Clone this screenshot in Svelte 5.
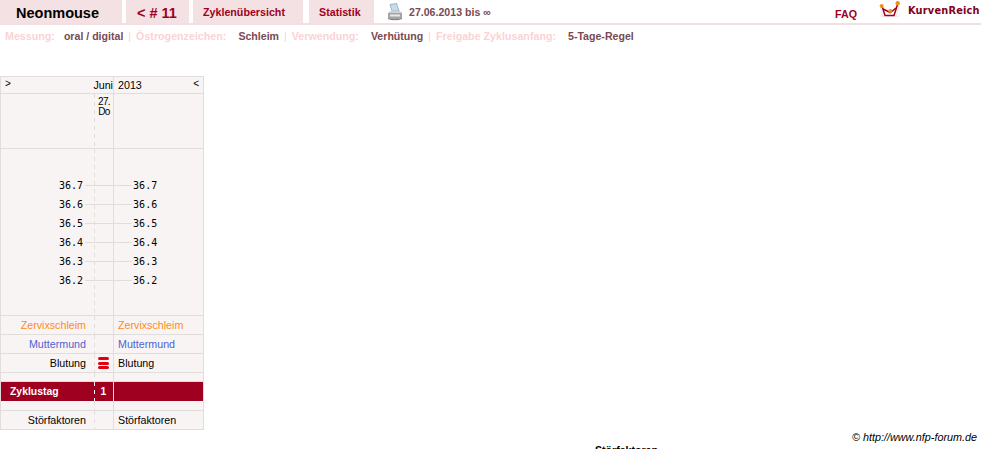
<script>
  const temps = ["36.7", "36.6", "36.5", "36.4", "36.3", "36.2"];
  const info = [
    ["Messung:", "oral / digital"],
    ["Östrogenzeichen:", "Schleim"],
    ["Verwendung:", "Verhütung"],
    ["Freigabe Zyklusanfang:", "5-Tage-Regel"]
  ];
</script>

<div class="page">
  <header class="top">
    <div class="tab name">Neonmouse</div>
    <div class="tab num">&lt; # 11</div>
    <div class="tab link over">Zyklenübersicht</div>
    <div class="tab link stat">Statistik</div>
    <svg class="printer" width="16" height="18" viewBox="0 0 16 18">
      <path d="M3 1.500 L9.500 0.500 L12 7.500 L5 8 Z" fill="#c4dcec" stroke="#7f9cb2" stroke-width="0.7"/>
      <path d="M1 10 L4 7.500 L12.500 7.500 L15 10 Z" fill="#d0d0d0"/>
      <path d="M1 10 L15 10 L15 15 Q8 17.500 1 15 Z" fill="#a4a4a4"/>
      <path d="M3 11.500 L13 11.500 L13 13.500 L3 13.500 Z" fill="#e8e8e8"/>
      <path d="M1 15 Q8 17.500 15 15 L15 16 Q8 18.500 1 16 Z" fill="#747474"/>
    </svg>
    <div class="range">27.06.2013 bis ∞</div>
    <div class="faq">FAQ</div>
    <div class="brand">
      <svg class="logo" width="21" height="18" viewBox="0 0 21 18">
        <path d="M1 4 L4 17 M20 4 L17 17 M0 15 L21 15" fill="none" stroke="#f4e2e2" stroke-width="1"/>
        <path d="M3 5 L6 14.500 L15 14.500 L19 2" fill="none" stroke="#a00020" stroke-width="1.500"/>
        <path d="M4 8 L11.300 11.500 L17 7" fill="none" stroke="#a00020" stroke-width="1.500"/>
        <circle cx="2.700" cy="5" r="2" fill="#f0901c"/>
        <circle cx="11.300" cy="10" r="2" fill="#f0901c"/>
        <circle cx="18.700" cy="2.200" r="2.200" fill="#f0901c"/>
      </svg>
      <span>KurvenReich</span>
    </div>
  </header>

  <div class="info">
    {#each info as [label, value], i}
      {#if i > 0}<span class="pipe">|</span>{/if}
      <span class="label">{label}</span>
      <span class="value" class:first={i === 0}>{value}</span>
    {/each}
  </div>

  <div class="chart">
    <div class="row head">
      <div class="month"><span class="arrow">&gt;</span><span>Juni</span></div>
      <div class="c3"><span>2013</span><span class="arrow">&lt;</span></div>
    </div>
    <div class="row dates">
      <div class="c1"></div>
      <div class="c2 dash"><span>27.</span><span>Do</span></div>
      <div class="c3"></div>
    </div>
    <div class="row temps">
      <div class="c1"></div>
      <div class="c2 dash"></div>
      <div class="c3"></div>
      <div class="scale">
        {#each temps as t}
          <div class="tick"><span>{t}</span><i></i><span>{t}</span></div>
        {/each}
      </div>
    </div>
    <div class="row line orange">
      <div class="c1">Zervixschleim</div>
      <div class="c2 dash"></div>
      <div class="c3">Zervixschleim</div>
    </div>
    <div class="row line blue">
      <div class="c1">Muttermund</div>
      <div class="c2 dash"></div>
      <div class="c3">Muttermund</div>
    </div>
    <div class="row line">
      <div class="c1">Blutung</div>
      <div class="c2 dash"><span class="blood"><i></i><i></i><i></i></span></div>
      <div class="c3">Blutung</div>
    </div>
    <div class="row gap">
      <div class="c1"></div>
      <div class="c2 dash"></div>
      <div class="c3"></div>
    </div>
    <div class="row day">
      <div class="c1">Zyklustag</div>
      <div class="c2 dash light">1</div>
      <div class="c3"></div>
    </div>
    <div class="row gap after">
      <div class="c1"></div>
      <div class="c2 dash"></div>
      <div class="c3"></div>
    </div>
    <div class="row line last">
      <div class="c1">Störfaktoren</div>
      <div class="c2 dash"></div>
      <div class="c3">Störfaktoren</div>
    </div>
  </div>

  <div class="copy">© http://www.nfp-forum.de</div>
  <div class="cut">Störfaktoren</div>
</div>

<style>
  :global(body) {
    margin: 0;
    background: #fff;
    overflow: hidden;
  }

  .page {
    position: relative;
    width: 981px;
    height: 449px;
    overflow: hidden;
    font-family: "Liberation Sans", Arial, sans-serif;
  }

  .top {
    display: flex;
    height: 23px;
    border-bottom: 2px solid #f3dfe1;
    align-items: stretch;
  }

  .tab {
    background: #f3e1e3;
    color: #a00020;
    font-weight: 700;
    display: flex;
    align-items: center;
    box-sizing: border-box;
    padding-top: 2px;
  }

  .name {
    width: 122px;
    padding-left: 16px;
    color: #000;
    font-size: 14.500px;
  }

  .num {
    width: 63px;
    margin-left: 4px;
    padding-left: 11px;
    font-size: 14.500px;
  }

  .link {
    font-size: 10.700px;
    padding-top: 1px;
  }

  .over {
    width: 110px;
    margin-left: 4px;
    padding-left: 10px;
  }

  .stat {
    width: 65px;
    margin-left: 6px;
    padding-left: 10px;
  }

  .printer {
    margin: 3px 0 0 13px;
  }

  .range {
    margin-left: 6px;
    font-size: 10.600px;
    font-weight: 700;
    color: #7a4a52;
    line-height: 25px;
  }

  .faq {
    margin-left: auto;
    font-size: 10.700px;
    font-weight: 700;
    color: #a00020;
    padding-top: 8px;
  }

  .brand {
    display: flex;
    width: 102px;
    margin-left: 22px;
    color: #800020;
    font: 700 9.800px "DejaVu Sans", sans-serif;
  }

  .logo {
    margin-top: 1px;
  }

  .brand span {
    margin: 5px 0 0 8px;
    letter-spacing: 0.2px;
  }

  .info {
    display: flex;
    height: 22px;
    padding-left: 5px;
    align-items: center;
    font-size: 10.600px;
    font-weight: 700;
  }

  .label {
    color: #fbd3d5;
    font-size: 10.700px;
  }

  .value {
    color: #7a4a52;
    margin-left: 12px;
  }

  .value.first {
    margin-left: 9px;
  }

  .pipe {
    color: #fbd3d5;
    font-weight: 400;
    margin: 0 5px;
  }

  .chart {
    position: relative;
    width: 204px;
    margin-top: 29px;
    box-sizing: border-box;
    background: #f9f4f4;
    border: 1px solid #e2dddd;
    font-size: 10.700px;
  }

  .row {
    display: flex;
    border-bottom: 1px solid #e2dddd;
  }

  .row.last {
    border-bottom: 0;
  }

  .c1 {
    width: 93px;
    box-sizing: border-box;
    padding-right: 8px;
    text-align: right;
  }

  .c2 {
    width: 19px;
    box-sizing: border-box;
    text-align: center;
  }

  .dash {
    background: repeating-linear-gradient(to bottom, #e2dddd 0 4px, transparent 4px 8px) left top / 1px 100% no-repeat;
  }

  .dash.light {
    background-image: repeating-linear-gradient(to bottom, #f9f4f4 0 4px, transparent 4px 8px);
  }

  .c3 {
    width: 90px;
    box-sizing: border-box;
    padding-left: 4px;
    border-left: 1px solid #e2dddd;
  }

  .head {
    height: 16px;
    line-height: 17px;
  }

  .month {
    width: 112px;
    box-sizing: border-box;
    display: flex;
    justify-content: space-between;
    padding: 0 0 0 4px;
  }

  .head .c3 {
    display: flex;
    justify-content: space-between;
    padding: 0 4px;
  }

  .arrow {
    font-size: 10px;
    line-height: 14px;
  }

  .dates {
    height: 54px;
  }

  .dates .c2 {
    display: flex;
    flex-direction: column;
    align-items: center;
    font-size: 10px;
    line-height: 10px;
    padding: 3px 0 0 1px;
    letter-spacing: -0.700px;
  }

  .temps {
    position: relative;
    height: 166px;
  }

  .scale {
    position: absolute;
    left: 58px;
    top: 27px;
    font: 10px/19px "DejaVu Sans Mono", monospace;
    color: #000;
  }

  .tick {
    display: flex;
    align-items: center;
    height: 19px;
  }

  .tick i {
    width: 47px;
    height: 1px;
    margin: 0 1px 0 2px;
    background: #e2dddd;
  }

  .line {
    height: 18px;
    line-height: 18px;
  }

  .orange {
    color: #ff8a1e;
  }

  .blue {
    color: #4f63d2;
  }

  .blood {
    display: flex;
    flex-direction: column;
    gap: 1.500px;
    width: 11px;
    margin: 3px 0 0 4px;
  }

  .blood i {
    height: 3px;
    border-radius: 2px;
    background: #e00010;
  }

  .gap {
    height: 8px;
  }

  .gap.after {
    height: 9px;
  }

  .day {
    height: 19px;
    line-height: 19px;
    background: #a00020;
    color: #fff;
    font-weight: 700;
    font-size: 10.400px;
    border-bottom: 0;
  }

  .day .c1 {
    text-align: left;
    padding-left: 9px;
  }

  .copy {
    position: absolute;
    right: 4px;
    top: 431px;
    font-size: 10.800px;
    font-style: italic;
    color: #000;
  }

  .cut {
    position: absolute;
    left: 595px;
    top: 444px;
    font-size: 10.600px;
    font-weight: 700;
  }
</style>
